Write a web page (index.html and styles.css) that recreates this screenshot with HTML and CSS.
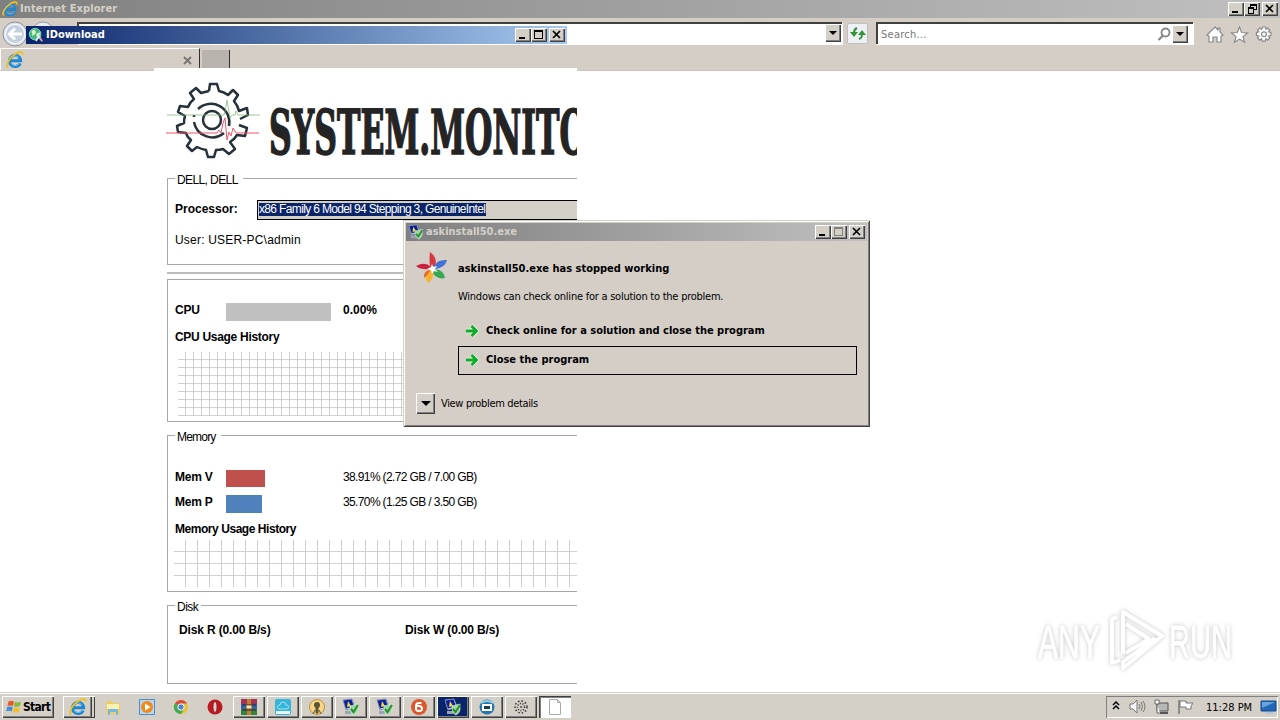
FILE: index.html
```html
<!DOCTYPE html>
<html lang="en">
<head>
    <meta charset="UTF-8">
    <title>Internet Explorer</title>
    <link rel="stylesheet" href="styles.css">
</head>
<body>
    <!-- Shared icons -->
    <svg class="defs" width="0" height="0">
        <symbol id="ie" viewBox="0 0 18 18">
            <path d="M14.2 12.300A5.600 5.600 0 1 1 14.700 9.700H4" fill="none" stroke="#1f86d2" stroke-width="3"/>
            <path d="M13.500 12.200A5 5 0 0 1 4.800 12M4.500 8A5 5 0 0 1 13 7" fill="none" stroke="#6cc4f4" stroke-width="1"/>
            <path d="M2 16.500C-.5 14 3.500 6.500 9 3.200s8.500-2.700 7.500.8" fill="none" stroke="#f2c01e" stroke-width="1.800"/>
        </symbol>
        <symbol id="shield" viewBox="0 0 18 18">
            <path d="M1 2l9-1 3 8-9 3z" fill="#d5dce8" stroke="#8290ac"/>
            <path d="M1.500 2.500l8-1 2.500 7-8 2z" fill="#0b1c9c"/>
            <path d="M6 3l3 5-4 1z" fill="#f5df35"/>
            <path d="M3 13h6v3H3z" fill="#9aa4b4"/>
            <path d="M8 8l8-2v5c0 3-2 5-4 6-3-1-4-4-4-9z" fill="#9fd79c" stroke="#dcebdc" stroke-width=".6"/>
            <path d="M9 11l2.500 3L16 7" fill="none" stroke="#258f35" stroke-width="2"/>
        </symbol>
        <symbol id="arrow" viewBox="0 0 14 14">
            <path d="M1 7h10M6.500 2L11.500 7l-5 5" fill="none" stroke="#e2f6df" stroke-width="4.500"/>
            <path d="M1 7h10M6.500 2L11.500 7l-5 5" fill="none" stroke="#12a92c" stroke-width="2.800"/>
        </symbol>
        <symbol id="min" viewBox="0 0 16 14"><path d="M4 9h6v2H4z"/></symbol>
        <symbol id="max" viewBox="0 0 16 14"><path d="M3 2h9v9H3zM4 4v6h7V4z" fill-rule="evenodd"/></symbol>
        <symbol id="close" viewBox="0 0 16 14"><path d="M4 3l7 7M11 3l-7 7" stroke="#000" stroke-width="1.700"/></symbol>
    </svg>

    <div class="desktop">
        <!-- Browser window -->
        <div class="browser">
            <div class="titlebar inactive browser-title">
                <svg class="title-icon"><use href="#ie"/></svg>
                <span class="title-text">Internet Explorer</span>
                <div class="win-buttons">
                    <span class="wb"><svg><use href="#min"/></svg></span>
                    <span class="wb"><svg viewBox="0 0 16 14"><path d="M6 2h7v6h-3v4H4V5h2zM7 4v1h3v2h2V4zM5 7v4h4V7z" fill-rule="evenodd"/></svg></span>
                    <span class="wb gap"><svg><use href="#close"/></svg></span>
                </div>
            </div>
            <div class="toolbar">
                <svg class="nav" width="60" height="28" viewBox="0 0 60 28">
                    <circle cx="43" cy="14" r="11" fill="#e9edf2" stroke="#96999e"/>
                    <circle cx="15" cy="15" r="12" fill="#dfe5ee" stroke="#8c9096"/>
                    <circle cx="15" cy="15" r="9.500" fill="#c4d0e0" stroke="#fff"/>
                    <path d="M22 15H10M15 9.500L9.500 15l5.500 5.500" fill="none" stroke="#fff" stroke-width="3"/>
                </svg>
                <div class="address"><span class="drop"></span></div>
                <div class="refresh">
                    <svg width="18" height="18" viewBox="0 0 18 18"><path d="M8 3C5 4 5 6 5 8M13 8c0 3 0 5-3 6" fill="none" stroke="#349438" stroke-width="2"/><path d="M1 7h8l-4 5zM9 10h8l-4-5z" fill="#349438"/></svg>
                </div>
                <div class="search">
                    <span>Search...</span>
                    <svg width="14" height="15" viewBox="0 0 14 15"><circle cx="8.500" cy="5.500" r="4" fill="none" stroke="#858585" stroke-width="1.800"/><path d="M6 8.500L1.500 13" stroke="#858585" stroke-width="2.200"/></svg>
                    <i class="drop"></i>
                </div>
                <svg class="tools" width="70" height="20" viewBox="0 0 70 20" fill="#fff" stroke="#898989" stroke-width="1.200">
                    <path d="M1 10L9 2l3 3V3h2v4l3 3-2 1v6h-4v-5H7v5H3v-6z"/>
                    <path d="M33.500 2l2.200 5.500 5.800.4-4.500 3.700 1.500 5.600-5-3.100-5 3.100 1.500-5.600-4.500-3.700 5.800-.4z"/>
                    <path d="M56.500 2h3l.5 2.200 1.600-1.200 2.200 2.100-1.300 1.800 2.400.6v3l-2.400.6 1.300 1.900-2.100 2.100-1.900-1.300-.6 2.400h-3l-.6-2.400-1.900 1.300-2.100-2.100 1.300-1.900-2.400-.6v-3l2.400-.6-1.300-1.900 2.200-2.100 1.900 1.300z"/>
                    <circle cx="58" cy="9.300" r="2.400"/>
                </svg>
            </div>
            <div class="tabs">
                <div class="tab">
                    <svg width="18" height="18"><use href="#ie"/></svg>
                    <svg width="9" height="9" viewBox="0 0 9 9"><path d="M1 1l7 7M8 1L1 8" stroke="#77736e" stroke-width="1.800"/></svg>
                </div>
                <div class="new-tab"></div>
            </div>
        </div>

        <!-- System monitor form -->
        <div class="monitor">
            <div class="brand">
                <svg width="423" height="101" viewBox="154 68 423 101">
                    <g fill="none" stroke="#26313a" stroke-width="2.500">
                        <path stroke-linejoin="round" d="M209 91L210 84H217L219 91Q224 92 228 95L233 90L238 95L234 101Q238 106 239 111L247 108L248 115L240 119M239 125L247 128L245 136L237 135Q234 140 230 142L235 149L229 154L223 149Q220 150 216 150L214 157H208L206 150Q201 149 197 147L192 151L187 146L191 140Q187 137 186 133L178 132L177 126L184 123Q184 119 185 116L178 112L180 106L188 107Q190 102 194 99L190 93L196 88L201 93Q205 92 209 91"/>
                        <circle cx="212" cy="120" r="9"/>
                        <path d="M198 109A18.500 18.500 0 0 1 229 126M224 133A18.500 18.500 0 0 1 194 122"/>
                        <path d="M194 115v2"/>
                    </g>
                    <path d="M167 115h57l1-3 2-12 3 18 2-3h3l1-4 2 4h22" fill="none" stroke="#80b478" stroke-width="1" opacity=".75"/>
                    <path d="M166 133h51l2-3 2 3 2-10 2-5 2 22 2-8 2 4 2-8 3 5h23" fill="none" stroke="#ef5568" stroke-width="1"/>
                    <text class="brand-text" x="269" y="154" textLength="344" lengthAdjust="spacingAndGlyphs">SYSTEM.MONITOR</text>
                </svg>
            </div>
            <div class="group g-system">
                <div class="caption c-dell">DELL, DELL</div>
                <div class="field">
                    <b>Processor:</b>
                    <div class="cpu-name"><span>x86 Family 6 Model 94 Stepping 3, GenuineIntel</span></div>
                </div>
                <div class="user">User: USER-PC\admin</div>
            </div>
            <div class="divider"></div>
            <div class="group g-cpu">
                <div class="row">
                    <b class="label">CPU</b>
                    <div class="track"><div class="bar bar-cpu"></div></div>
                    <b>0.00%</b>
                </div>
                <b class="history">CPU Usage History</b>
                <div class="grid-cpu"></div>
            </div>
            <div class="group g-memory">
                <div class="caption c-memory">Memory</div>
                <div class="row row-v">
                    <b class="label">Mem V</b>
                    <div class="track"><div class="bar bar-v"></div></div>
                    <span class="amount">38.91% (2.72 GB / 7.00 GB)</span>
                </div>
                <div class="row row-p">
                    <b class="label">Mem P</b>
                    <div class="track"><div class="bar bar-p"></div></div>
                    <span class="amount">35.70% (1.25 GB / 3.50 GB)</span>
                </div>
                <b class="history">Memory Usage History</b>
                <div class="grid-memory"></div>
            </div>
            <div class="group g-disk">
                <div class="caption c-disk">Disk</div>
                <div class="disks"><b>Disk R (0.00 B/s)</b><b>Disk W (0.00 B/s)</b></div>
            </div>
        </div>

        <div class="titlebar active download">
            <svg class="title-icon" viewBox="0 0 18 18">
                <circle cx="8" cy="8" r="6.500" fill="#45b878" stroke="#8adbe0"/>
                <path d="M4 4l4-1 1 4-4 3zM10 7l4-1-2 5-3-1z" fill="#d3f3c4"/>
                <path d="M9 16l3-6 4 6" fill="none" stroke="#dceaf3" stroke-width="2"/><path d="M14 12l2 4" stroke="#c33" stroke-width="1"/>
            </svg>
            <span class="title-text">IDownload</span>
            <div class="win-buttons">
                <span class="wb"><svg><use href="#min"/></svg></span>
                <span class="wb"><svg><use href="#max"/></svg></span>
                <span class="wb gap"><svg><use href="#close"/></svg></span>
            </div>
        </div>

        <!-- Crash dialog -->
        <div class="dialog">
            <div class="titlebar inactive">
                <svg class="title-icon"><use href="#shield"/></svg>
                <span class="title-text">askinstall50.exe</span>
                <div class="win-buttons">
                    <span class="wb"><svg><use href="#min"/></svg></span>
                    <span class="wb disabled"><svg><use href="#max"/></svg></span>
                    <span class="wb gap"><svg><use href="#close"/></svg></span>
                </div>
            </div>
            <div class="dialog-head">
                <svg width="32" height="32" viewBox="0 0 32 32">
                    <path d="M14 15Q13 8 14 0Q22 6 19 14z" fill="#d73842"/>
                    <path d="M18 14Q22 7 31 8Q29 16 19 17z" fill="#4173d6"/>
                    <path d="M19 17Q28 18 29 26Q21 28 16 20z" fill="#35a853"/>
                    <path d="M17 18Q19 26 12 31Q7 25 13 18z" fill="#f6b22a"/>
                    <path d="M13 18Q7 20 8 26Q11 24 14 19z" fill="#e66830"/>
                    <path d="M14 17Q5 18 0 14Q9 9 15 15z" fill="#c9203c"/>
                    <path d="M16 12l1 3 4-1-2 3 3 3-4-1-2 3-1-4-4-1 4-2z" fill="#fff"/>
                </svg>
                <h1>askinstall50.exe has stopped working</h1>
            </div>
            <p>Windows can check online for a solution to the problem.</p>
            <div class="command"><svg width="14" height="14"><use href="#arrow"/></svg><span>Check online for a solution and close the program</span></div>
            <div class="command focused"><svg width="14" height="14"><use href="#arrow"/></svg><span>Close the program</span></div>
            <div class="details"><i class="expand"></i><span>View problem details</span></div>
        </div>

        <svg class="watermark" width="210" height="80" viewBox="0 0 210 80">
            <g class="wm-text">
                <text x="8" y="58" textLength="62" lengthAdjust="spacingAndGlyphs">ANY</text>
                <text x="139" y="58" textLength="63" lengthAdjust="spacingAndGlyphs">RUN</text>
            </g>
            <g fill="none" stroke="#fff" stroke-width="4" stroke-linejoin="round">
                <path d="M93 54V12L132 36 93 68V62L125 38"/>
                <path d="M87 17L82 19V63L90 60"/>
                <path d="M96 24l23 15-23 14"/>
            </g>
        </svg>

        <!-- Taskbar -->
        <div class="taskbar">
            <div class="task start">
                <svg width="16" height="16" viewBox="0 0 16 16">
                    <path d="M2.500 2.500Q5 1 8 2.500L7 7Q4 6 1.500 7z" fill="#e8582c"/><path d="M9 3Q12 4 15 2.500L14 7Q11 8.500 8 7.300z" fill="#82b93a"/>
                    <path d="M1.200 8Q4 7 6.800 8L5.800 12.500Q3 11 .2 12.500z" fill="#3e8ed8"/><path d="M7.800 8.500Q11 9.500 13.700 8.200L12.700 13Q10 14.200 6.800 13z" fill="#f5bd2c"/>
                </svg>
                <b>Start</b>
            </div>
            <div class="stack"><div class="task"><svg width="18" height="18"><use href="#ie"/></svg></div></div>
            <div class="pinned">
                <svg width="18" height="18" viewBox="0 0 18 18"><path d="M2 3h6l1 2h7v11H2z" fill="#edcd68"/><path d="M3 6h12v5H3z" fill="#fbf0b1"/><path d="M4 17v-6h10v6h-2v-3H6v3z" fill="#74b9e5"/></svg>
                <svg width="18" height="18" viewBox="0 0 18 18"><path d="M1.500 1.500h15v15h-15z" fill="#b4d8f3" stroke="#4d90c9"/><circle cx="9" cy="9" r="6" fill="#f28918"/><path d="M7 5.500v7l5.500-3.500z" fill="#fff"/></svg>
                <svg width="18" height="18" viewBox="0 0 18 18"><circle cx="9" cy="9" r="7" fill="#eac331"/><path d="M9 9L2.900 5.500A7 7 0 0 1 15.100 5.500H9z" fill="#d94a3a"/><path d="M9 9L2.900 5.500A7 7 0 0 0 9 16l3-5z" fill="#41a950"/><circle cx="9" cy="9" r="3.200" fill="#4c83d0" stroke="#fff" stroke-width="1"/></svg>
                <svg width="18" height="18" viewBox="0 0 18 18"><circle cx="9" cy="9" r="7.500" fill="#bd1720"/><ellipse cx="9" cy="9" rx="2" ry="5.500" fill="#d4d0c8" stroke="#7b0f15" stroke-width=".7"/></svg>
            </div>
            <div class="tasks">
                <div class="task"><svg width="18" height="18" viewBox="0 0 18 18"><path d="M1 1h16v5H1z" fill="#a33159"/><path d="M1 6h16v5H1z" fill="#3262ae"/><path d="M1 11h16v6H1z" fill="#348140"/><path d="M7 1h4v16H7z" fill="#c3812d"/><path d="M2 7h14M2 12h14" stroke="#31202e"/><path d="M6 7h6v4H6z" fill="#f2e6bc" stroke="#70512a"/></svg></div>
                <div class="task"><svg width="18" height="18" viewBox="0 0 18 18"><rect x="1" y="1" width="16" height="16" rx="2" fill="#35b5dc"/><path d="M2 13h14v3H2z" fill="#e5f7fa"/><path d="M5 11a2 2 0 0 1 1-4 3 3 0 0 1 6 0 2 2 0 0 1 1 4z" fill="none" stroke="#a9e4f1"/></svg></div>
                <div class="task"><svg width="18" height="18" viewBox="0 0 18 18"><circle cx="9" cy="9" r="7.500" fill="#f5d688" stroke="#c0903d"/><circle cx="9" cy="7" r="3" fill="#5e5331"/><path d="M8 8h2v7H8zM5 16l2-4M13 16l-2-4" stroke="#5e5331" fill="#5e5331"/></svg></div>
                <div class="task"><svg width="18" height="18"><use href="#shield"/></svg></div>
                <div class="task"><svg width="18" height="18"><use href="#shield"/></svg></div>
                <div class="task"><svg width="18" height="18" viewBox="0 0 18 18"><circle cx="9" cy="9" r="8" fill="#dc572c"/><path d="M11.500 5H9Q6 5 6 8v3q0 2 3 2t3-2.500T9 8H6" fill="none" stroke="#fff" stroke-width="2"/></svg></div>
                <div class="task navy"><svg width="18" height="18"><use href="#shield"/></svg></div>
                <div class="task"><svg width="18" height="18" viewBox="0 0 18 18"><circle cx="9" cy="9" r="7.500" fill="#2377aa"/><path d="M3 5q6-4 12 0" fill="none" stroke="#95cfe8" stroke-width="2"/><path d="M5 7h8v5H5z" fill="#163e58" stroke="#fff" stroke-width="2"/></svg></div>
                <div class="task"><svg width="18" height="18" viewBox="0 0 18 18"><circle cx="9" cy="9" r="6" fill="none" stroke="#303030" stroke-width="1.500" stroke-dasharray="1.500 2"/><circle cx="9" cy="9" r="3.500" fill="none" stroke="#303030" stroke-width="1.500" stroke-dasharray="1 1.500"/><circle cx="9" cy="9" r="1" fill="#555"/></svg></div>
                <div class="task pressed"><svg width="18" height="18" viewBox="0 0 18 18"><path d="M3.500 1.500h8l3 3v12h-11z" fill="#fff" stroke="#aaa"/><path d="M11.500 1.500v3h3" fill="none" stroke="#aaa"/></svg></div>
            </div>
            <div class="tray">
                <svg width="83" height="18" viewBox="0 0 83 18">
                    <path d="M3 7l3-3 3 3M3 11l3-3 3 3" fill="none" stroke="#000" stroke-width="1.500"/>
                    <path d="M20 6h3l4-4v13l-4-4h-3z" fill="#f7f7f7" stroke="#777"/><path d="M29 6q2 3 0 5M31 4q3 4 0 9M33 3q4 6 0 11" fill="none" stroke="#777"/>
                    <path d="M47 5h11v8H47z" fill="#b6b6b6" stroke="#555"/><path d="M50 15h8" stroke="#555" stroke-width="2"/><path d="M45 2h4v4h-4zM47 6v9h3" fill="#fff" stroke="#666"/>
                    <path d="M69 2v14" stroke="#777" stroke-width="1.500"/><path d="M70 3h6v2h7l-2 3 0 3h-5V9h-6z" fill="#fff" stroke="#777"/>
                </svg>
                <span>11:28 PM</span>
                <svg width="17" height="16" viewBox="0 0 17 16"><path d="M1 2h15v10H1z" fill="#2367b9" stroke="#17488c"/><path d="M2 3h13l-13 6z" fill="#68a4df"/><path d="M5 14h8" stroke="#b5c5d8" stroke-width="2"/></svg>
            </div>
        </div>
    </div>
</body>
</html>
```
FILE: styles.css
```css
* {
    box-sizing: border-box;
}

body {
    margin: 0;
    background: #fff;
    font-family: "DejaVu Sans Condensed", "DejaVu Sans", sans-serif;
    font-size: 11px;
    color: #000;
}

.defs {
    position: absolute;
}

svg {
    display: block;
    flex: none;
}

.desktop {
    position: relative;
    width: 1280px;
    height: 720px;
    overflow: hidden;
    white-space: nowrap;
}

/* Title bars */
.titlebar {
    display: flex;
    align-items: center;
    height: 18px;
    padding: 0 2px;
    color: #fff;
}

.inactive {
    background: linear-gradient(to right, #808080, #c0c0c0);
    color: #d4d0c8;
}

.active {
    background: linear-gradient(to right, #0a246a, #a6caf0);
}

.title-icon {
    width: 16px;
    height: 16px;
}

.title-text {
    margin-left: 2px;
    font-weight: bold;
    line-height: 18px;
}

.browser-title .title-text {
    letter-spacing: .08px;
}

.win-buttons {
    display: flex;
    margin-left: auto;
}

.wb {
    width: 16px;
    height: 14px;
    background: #d4d0c8;
    box-shadow: inset 1px 1px #fff, inset -1px -1px #404040, inset -2px -2px #808080;
}

.wb svg {
    width: 16px;
    height: 14px;
}

.wb.gap {
    margin-left: 2px;
}

.disabled svg {
    fill: #808080;
}

/* Browser */
.browser {
    height: 71px;
    background: #d4cec7;
}

.toolbar {
    display: flex;
    height: 29px;
    padding-top: 2px;
}

.nav {
    margin: -1px 17px 0 0;
}

.address, .search {
    display: flex;
    height: 22px;
    margin-top: 2px;
    background: #fff;
    border: solid #404040;
    border-width: 2px 0 0 2px;
    box-shadow: 1px 1px #fff;
}

.address {
    width: 765px;
    padding-right: 1px;
    justify-content: flex-end;
}

.drop, .expand {
    display: flex;
    align-items: center;
    justify-content: center;
    width: 16px;
    height: 18px;
    background: #d4d0c8;
    box-shadow: inset 1px 1px #fff, inset -1px -1px #404040, inset -2px -2px #808080;
}

.drop::after, .expand::after {
    content: "";
    border: 4px solid transparent;
    border-top-color: #000;
    border-bottom: 0;
}

.refresh {
    width: 21px;
    height: 21px;
    margin: 3px 8px 0 5px;
    padding: 1px;
    background: #eef0f5;
    border: 1px solid #c0bfbd;
    border-radius: 2px;
}

.search {
    width: 317px;
    padding-left: 3px;
    align-items: center;
    color: #777;
}

.search span {
    letter-spacing: .25px;
}

.search svg {
    margin: 0 1px 0 auto;
}

.search .drop {
    margin-right: 5px;
}

.tools {
    margin: 5px 0 0 13px;
}

.tabs {
    display: flex;
    height: 24px;
    align-items: flex-end;
    border-bottom: 1px solid #cbc6bf;
}

.tab {
    display: flex;
    align-items: center;
    justify-content: space-between;
    width: 200px;
    height: 22px;
    padding: 1px 7px 0 5px;
    border: 1px solid #fff;
    border-right: 1px solid #303030;
    border-bottom: 0;
}

.new-tab {
    width: 28px;
    height: 20px;
    margin-left: 2px;
    background: #b9b3ad;
    border-right: 1px solid #303030;
}

/* System monitor */
.monitor {
    position: absolute;
    left: 154px;
    top: 68px;
    width: 423px;
    height: 625px;
    padding-left: 13px;
    background: #fff;
    overflow: hidden;
    font-family: "Liberation Sans", Arial, sans-serif;
    font-size: 12px;
    line-height: 14px;
}

.brand {
    height: 101px;
    margin-left: -13px;
}

.brand-text {
    font: bold 61px "DejaVu Serif Condensed", "DejaVu Serif", serif;
    fill: #242424;
    stroke: #242424;
    stroke-width: 1.6px;
}

.group {
    border: solid #a7a7a7;
    border-width: 1px 0 1px 1px;
    padding-left: 7px;
}

.caption {
    width: max-content;
    height: 14px;
    margin: -6px 0 0;
    padding: 0 5px 0 2px;
    background: #fff;
}

.c-dell {
    letter-spacing: -.6px;
}

.c-memory {
    letter-spacing: -.8px;
}

.c-disk {
    padding-right: 3px;
    letter-spacing: -.5px;
}

.g-system {
    height: 87px;
    margin-top: 9px;
}

.field {
    display: flex;
    align-items: center;
    height: 20px;
    margin-top: 13px;
}

.field b {
    width: 82px;
    margin-top: -2px;
}

.cpu-name {
    flex: 1;
    height: 20px;
    padding: 2px 0 0 1px;
    background: #d4d0c8;
    border: solid #000;
    border-width: 1px 0 1px 1px;
}

.cpu-name span {
    display: block;
    width: 227px;
    line-height: 13px;
    background: #0a246a;
    color: #fff;
    letter-spacing: -.65px;
}

.user {
    margin-top: 13px;
    letter-spacing: .2px;
}

.divider {
    height: 2px;
    margin: 7px 0 5px;
    background: #bcbcbc;
}

.g-cpu {
    height: 143px;
    padding-top: 20px;
}

.row {
    display: flex;
    align-items: center;
    height: 20px;
}

.label {
    width: 51px;
    letter-spacing: -.2px;
}

.track {
    width: 117px;
}

.bar {
    height: 18px;
    margin-top: 3px;
}

.bar-cpu {
    width: 105px;
    background: #c0c0c0;
}

.bar-v {
    width: 39px;
    height: 17px;
    background: #c0504d;
}

.bar-p {
    width: 36px;
    background: #4f81bd;
}

.amount {
    letter-spacing: -.63px;
}

.history {
    display: block;
    margin-top: 10px;
    letter-spacing: -.3px;
}

.grid-cpu {
    height: 64px;
    margin: 8px 0 0 3px;
    background:
        repeating-linear-gradient(to right, transparent 0 7px, #cfcfcf 7px 8px),
        repeating-linear-gradient(transparent 0 7px, #cfcfcf 7px 8px);
}

.g-memory {
    height: 157px;
    margin-top: 13px;
}

.row-v {
    margin-top: 23px;
}

.row-p {
    margin-top: 5px;
}

.g-memory .history {
    letter-spacing: -.45px;
}

.grid-memory {
    height: 47px;
    margin: 4px 0 0 -1px;
    background:
        repeating-linear-gradient(to right, transparent 0 11px, #cfcfcf 11px 12px),
        repeating-linear-gradient(transparent 0 11px, #cfcfcf 11px 12px);
}

.g-disk {
    height: 79px;
    margin-top: 13px;
}

.disks {
    display: flex;
    padding: 9px 0 0 4px;
}

.disks b {
    flex: none;
    width: 226px;
    letter-spacing: -.15px;
}

.disks b + b {
    width: auto;
}

.download {
    position: absolute;
    left: 26px;
    top: 26px;
    width: 541px;
}

/* Crash dialog */
.dialog {
    position: absolute;
    left: 403px;
    top: 220px;
    width: 467px;
    height: 207px;
    padding: 3px;
    background: #d4cec7;
    box-shadow: inset 1px 1px #d4d0c8, inset -1px -1px #404040, inset 2px 2px #fff, inset -2px -2px #808080;
}

.dialog-head {
    display: flex;
    align-items: center;
    height: 32px;
    margin: 11px 0 0 10px;
}

.dialog h1 {
    margin: 0 0 0 10px;
    font-size: 11px;
}

.dialog p {
    margin: 6px 0 13px 52px;
    line-height: 14px;
    letter-spacing: -.24px;
}

.command {
    display: flex;
    align-items: center;
    height: 29px;
    margin-left: 52px;
    width: 399px;
    padding: 0 6px;
    font-weight: bold;
    border: 1px solid transparent;
}

.command svg {
    margin: 0 7px 2px 0;
}

.command.focused {
    border-color: #000;
}

.command span {
    margin-top: -3px;
}

.details {
    display: flex;
    align-items: center;
    margin: 18px 0 0 10px;
    letter-spacing: -.34px;
}

.details span {
    margin-top: -1px;
}

.expand {
    width: 19px;
    height: 21px;
    margin-right: 6px;
}

.expand::after {
    border-width: 5px 5px 0;
}

/* Watermark */
.watermark {
    position: absolute;
    left: 1030px;
    top: 600px;
    filter: drop-shadow(0 0 2px #c4c4c4);
}

.wm-text {
    font: 46px "Liberation Sans", Arial, sans-serif;
    fill: #fff;
    stroke: #fff;
    stroke-width: .8px;
}

/* Taskbar */
.taskbar {
    position: absolute;
    left: 0;
    top: 692px;
    width: 1280px;
    height: 28px;
    display: flex;
    align-items: flex-start;
    padding: 4px 2px 0;
    background: #d4d0c8;
    box-shadow: inset 0 1px #d4d0c8, inset 0 2px #fff;
}

.task {
    display: flex;
    align-items: center;
    justify-content: center;
    width: 32px;
    height: 22px;
    background: #d4d0c8;
    box-shadow: inset 1px 1px #fff, inset -1px -1px #404040, inset -2px -2px #808080;
}

.start {
    width: 52px;
    gap: 1px;
    font-size: 12px;
}

.start b {
    letter-spacing: -.7px;
}

.stack {
    width: 32px;
    margin-left: 9px;
    box-shadow: inset 0 1px #fff, inset -1px -1px #404040;
}

.stack .task {
    width: 29px;
}

.pinned {
    display: flex;
    gap: 16px;
    margin: 2px 9px 0;
}

.tasks {
    display: flex;
    gap: 2px;
}

.task.navy {
    background: #0a246a;
}

.task.pressed {
    background: #fff;
    box-shadow: inset 1px 1px #404040, inset 2px 2px #808080, inset -1px -1px #fff;
}

.tray {
    display: flex;
    align-items: center;
    width: 172px;
    height: 22px;
    margin-left: auto;
    padding: 0 0 0 4px;
    box-shadow: inset 1px 1px #808080, inset -1px -1px #fff;
}

.tray span {
    width: 54px;
    margin-left: 13px;
}
```
